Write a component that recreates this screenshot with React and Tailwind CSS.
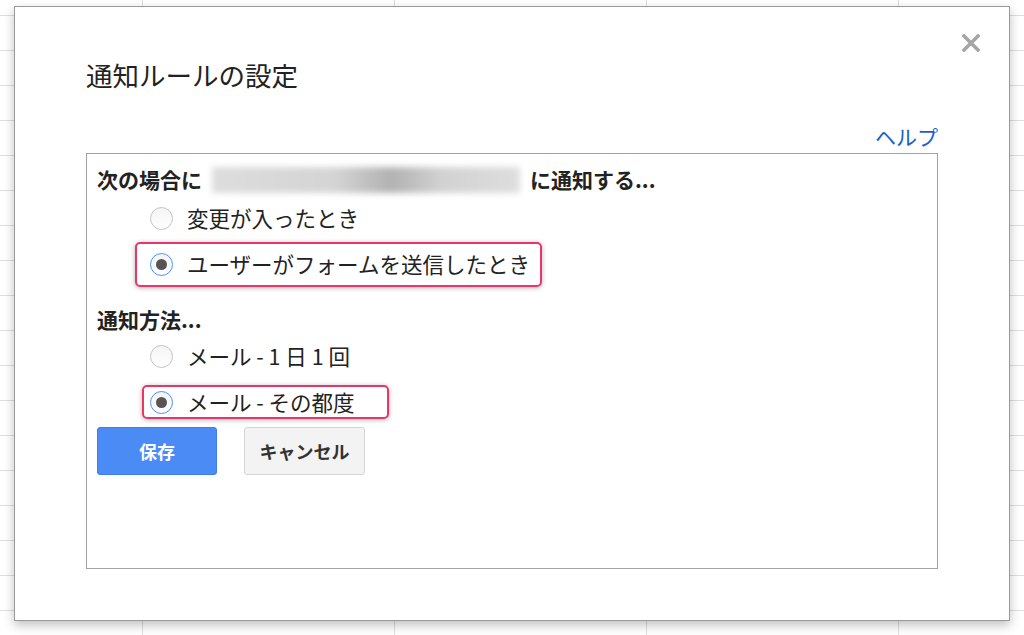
import React from "react";

const font = { fontFamily: '"Noto Sans CJK JP", "Noto Sans", sans-serif' };

function Radio({ checked }) {
  return (
    <span
      className={
        "flex h-[23px] w-[23px] shrink-0 items-center justify-center rounded-full border bg-[linear-gradient(to_bottom,#f4f4f4,#ffffff)] " +
        (checked ? "border-[#4d90fe]" : "border-[#c4c4c4]")
      }
    >
      {checked && <span className="h-[11px] w-[11px] rounded-full bg-[#555]" />}
    </span>
  );
}

export default function App() {
  return (
    <div
      className="relative h-[635px] w-[1024px] overflow-hidden bg-white bg-[image:linear-gradient(to_right,#dedede_1px,transparent_1px),linear-gradient(to_bottom,#dedede_1px,transparent_1px)] bg-[size:252px_35px] bg-[position:142px_15px] pl-[14px] pt-[6px]"
      style={font}
    >
      <div className="relative flex h-[615px] w-[996px] flex-col border border-[#9a9a9a] bg-white pl-[71px] pt-[52px] shadow-[0_4px_10px_rgba(0,0,0,0.25)]">
        <button className="absolute left-[941px] top-[21px] flex h-[30px] w-[30px] items-center justify-center">
          <svg width="18" height="18" viewBox="0 0 18 18">
            <path d="M2 2 L16 16 M16 2 L2 16" stroke="#a6a6a6" strokeWidth="3.6" strokeLinecap="square" />
          </svg>
        </button>
        <div className="h-[31px] text-[26.5px] leading-[31px] text-[#222]">通知ルールの設定</div>
        <div className="mt-[32px] flex w-[852px] justify-end">
          <span className="text-[21px] leading-[28px] text-[#1a5fcf]">ヘルプ</span>
        </div>
        <div className="mt-[3px] h-[416px] w-[852px] border border-[#a3a3a3] pl-[10px] pt-[9px]">
          <div className="flex h-[34px] items-center text-[21px] font-bold text-[#222]">
            <span>次の場合に</span>
            <span className="relative mx-[8px] h-[30px] w-[312px]">
              <span className="absolute inset-[2px] bg-[linear-gradient(to_right,#dddddd_0%,#d4d4d4_40%,#b2b2b2_58%,#d2d2d2_75%,#dedede_100%)] blur-[3px]" />
            </span>
            <span>に通知する...</span>
          </div>
          <div className="ml-[53px] flex h-[42px] items-center gap-[14px] text-[21.5px] text-[#222]">
            <Radio />
            <span>変更が入ったとき</span>
          </div>
          <div className="ml-[38px] mt-[3px] flex h-[45px] w-[407px] items-center gap-[14px] rounded-[5px] border-2 border-[#e6366c] pl-[13px] text-[21.5px] text-[#222] shadow-[0_1px_5px_rgba(0,0,0,0.3)]">
            <Radio checked />
            <span>ユーザーがフォームを送信したとき</span>
          </div>
          <div className="mt-[16px] flex h-[34px] items-center text-[21px] font-bold text-[#222]">通知方法...</div>
          <div className="ml-[53px] flex h-[38px] items-center gap-[14px] text-[21.5px] text-[#222]">
            <Radio />
            <span className="whitespace-pre">メール - 1 日 1 回</span>
          </div>
          <div className="ml-[45px] mt-[10px] flex h-[34px] w-[247px] items-center gap-[14px] rounded-[5px] border-2 border-[#e6366c] pl-[6px] text-[21.5px] text-[#222] shadow-[0_1px_5px_rgba(0,0,0,0.3)]">
            <Radio checked />
            <span>メール - その都度</span>
          </div>
          <div className="mt-[8px] flex gap-[27px]">
            <button className="h-[48px] w-[120px] rounded-[3px] border border-[#3b7ff0] bg-[#4a8bf5] text-[18px] font-bold text-white">
              保存
            </button>
            <button className="h-[48px] w-[121px] rounded-[3px] border border-[#d6d6d6] bg-[#f3f3f3] text-[18px] font-bold text-[#333]">
              キャンセル
            </button>
          </div>
        </div>
      </div>
    </div>
  );
}
